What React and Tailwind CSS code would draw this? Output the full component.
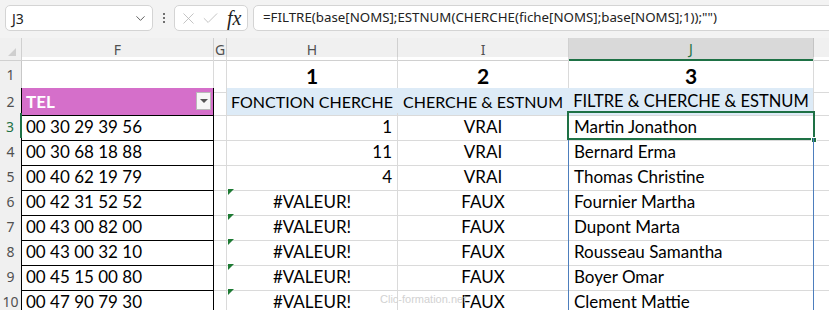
import { ChevronDown, X, Check } from 'lucide-react';

const grid = 'grid grid-cols-[22px_192px_13px_171px_171px_245px_1fr]';
const cellFont = { fontFamily: 'Lato, "Open Sans", sans-serif' };
const uiFont = { fontFamily: '"Noto Sans", "Open Sans", sans-serif' };

const phones = [
  '00 30 29 39 56',
  '00 30 68 18 88',
  '00 40 62 19 79',
  '00 42 31 52 52',
  '00 43 00 82 00',
  '00 43 00 32 10',
  '00 45 15 00 80',
  '00 47 90 79 30',
];
const positions = ['1', '11', '4', null, null, null, null, null];
const names = [
  'Martin Jonathon',
  'Bernard Erma',
  'Thomas Christine',
  'Fournier Martha',
  'Dupont Marta',
  'Rousseau Samantha',
  'Boyer Omar',
  'Clement Mattie',
];

const TopBar = () => (
  <div className="h-[38px] bg-[#f3f3f3] flex items-start pt-[5px] pl-[5px] overflow-hidden" style={uiFont}>
    <div className="w-[148px] h-[26px] bg-white border border-[#d4d4d4] rounded-[5px] flex items-center justify-between pl-[6px] pr-[4px] text-[14px] text-[#222]">
      <span>J3</span>
      <ChevronDown size={15} strokeWidth={1.5} className="text-[#555]" />
    </div>
    <div className="w-[21px] h-[26px] flex flex-col items-center justify-center gap-[2px]">
      <span className="w-[2px] h-[2px] bg-[#444] rounded-full" />
      <span className="w-[2px] h-[2px] bg-[#444] rounded-full" />
      <span className="w-[2px] h-[2px] bg-[#444] rounded-full" />
    </div>
    <div className="w-[74px] h-[26px] bg-white border border-[#d4d4d4] rounded-[5px] flex items-center pl-[4px]">
      <X size={19} strokeWidth={1} className="text-[#b4b4b4]" />
      <Check size={19} strokeWidth={1} className="text-[#b4b4b4] ml-[3px]" />
      <span className="ml-[7px] text-[20px] italic text-[#222] leading-none" style={{ fontFamily: '"Liberation Serif", serif' }}>fx</span>
    </div>
    <div className="flex-1 ml-[5px] -mr-[10px] h-[26px] bg-white border border-[#d4d4d4] rounded-l-[5px] flex items-center pl-[9px] text-[13.3px] text-[#222] whitespace-nowrap">
      =FILTRE(base[NOMS];ESTNUM(CHERCHE(fiche[NOMS];base[NOMS];1));"")
    </div>
  </div>
);

const ColHeader = () => (
  <div className={`${grid} h-[19px] bg-[#f0f0f0] text-[14px] text-[#505050]`} style={uiFont}>
    <div className="relative border-r border-b border-[#d0d0d0]">
      <div className="absolute right-[5px] bottom-[4px] w-0 h-0 border-l-[8px] border-l-transparent border-b-[8px] border-b-[#cfcfcf]" />
    </div>
    <div className="flex items-center justify-center border-r border-b border-[#d0d0d0]">F</div>
    <div className="flex items-center justify-center border-r border-b border-[#d0d0d0]">G</div>
    <div className="flex items-center justify-center border-r border-b border-[#d0d0d0]">H</div>
    <div className="flex items-center justify-center border-r border-b border-[#d0d0d0]">I</div>
    <div className="flex items-center justify-center bg-[#d9d9d9] text-[#1e7145] border-r border-[#c4c4c4] border-b-2 border-b-[#1e7145]">J</div>
    <div className="border-b border-[#d0d0d0]" />
  </div>
);

const RowNum = ({ n, active, edge }) => (
  <div
    className={`flex items-center justify-center bg-[#f0f0f0] border-b border-[#dadada] text-[14px] ${
      active ? 'text-[#1e7145] border-r-2 border-r-[#1e7145]' : edge ? 'text-[#505050] border-r border-r-black' : 'text-[#505050] border-r border-r-[#c8c8c8]'
    }`}
    style={uiFont}
  >
    {n}
  </div>
);

const Sheet = () => (
  <div className="relative">
    <ColHeader />

    <div className={`${grid} h-[31px]`} style={cellFont}>
      <RowNum n={1} />
      <div className="border-r border-[#dadada] border-b border-b-black" />
      <div className="border-r border-b border-[#dadada]" />
      <div className="flex items-center justify-center pt-[3px] text-[21px] font-bold text-black border-r border-b border-[#dadada]">1</div>
      <div className="flex items-center justify-center pt-[3px] text-[21px] font-bold text-black border-r border-b border-[#dadada]">2</div>
      <div className="flex items-center justify-center pt-[3px] text-[21px] font-bold text-black border-r border-b border-[#dadada]">3</div>
      <div className="border-b border-[#dadada]" />
    </div>

    <div className={`${grid} h-[25px]`} style={cellFont}>
      <RowNum n={2} edge />
      <div className="flex items-center justify-between bg-[#d56fca] border-r border-b border-black pl-[4px] pr-[2px]">
        <span className="text-white font-bold text-[17px] pt-[1px]">TEL</span>
        <span className="w-[15px] h-[18px] bg-[#f7f7f7] border border-[#b9b9b9] flex items-center justify-center">
          <span className="w-0 h-0 border-l-[4px] border-r-[4px] border-t-[4px] border-l-transparent border-r-transparent border-t-[#555]" />
        </span>
      </div>
      <div className="border-r border-b border-[#dadada]" />
      <div className="flex items-center justify-center pt-[1px] bg-[#ddebf7] text-[16px] text-black border-r border-r-[#ddebf7] border-b border-b-[#dadada] whitespace-nowrap">FONCTION CHERCHE</div>
      <div className="flex items-center justify-center pt-[1px] bg-[#ddebf7] text-[16px] text-black border-r border-r-[#ddebf7] border-b border-b-[#dadada] whitespace-nowrap">CHERCHE &amp; ESTNUM</div>
      <div className="flex items-center justify-center pt-[1px] bg-[#ddebf7] text-[16.5px] text-black border-r border-r-[#dadada] border-b border-b-[#dadada] whitespace-nowrap">FILTRE &amp; CHERCHE &amp; ESTNUM</div>
      <div className="border-b border-[#dadada]" />
    </div>

    {phones.map((phone, i) => (
      <div key={phone} className={`${grid} h-[25px] text-[17px] text-black`} style={cellFont}>
        <RowNum n={i + 3} active={i === 0} edge />
        <div className="flex items-center pl-[4px] pt-[1px] border-r border-b border-black">{phone}</div>
        <div className="border-r border-b border-[#dadada]" />
        {positions[i] ? (
          <div className="flex items-center justify-end pr-[5px] pt-[1px] border-r border-b border-[#dadada]">{positions[i]}</div>
        ) : (
          <div className="relative flex items-center justify-center pt-[1px] border-r border-b border-[#dadada]">
            <span className="absolute left-[1px] top-[1px] w-0 h-0 border-t-[6px] border-r-[6px] border-t-[#1e7b34] border-r-transparent" />
            #VALEUR!
          </div>
        )}
        <div className="flex items-center justify-center pt-[1px] border-r border-r-[#4d7ebd] border-b border-b-[#dadada]">
          {positions[i] ? 'VRAI' : 'FAUX'}
        </div>
        <div className="relative flex items-center pl-[5px] pt-[1px] border-r border-r-[#4d7ebd] border-b border-b-[#dadada]">
          {names[i]}
          {i === 0 && (
            <>
              <span className="absolute -left-[2px] -top-[2px] -right-[2px] bottom-0 border-2 border-[#1e7145] pointer-events-none" />
              <span className="absolute -right-[4px] -bottom-[3px] w-[6px] h-[6px] bg-[#1e7145] border border-white" />
            </>
          )}
        </div>
        <div className="border-b border-[#dadada]" />
      </div>
    ))}

    <span className="absolute left-[380px] top-[253px] text-[11px] text-[#d2d2d2]" style={{ fontFamily: '"Liberation Sans", sans-serif' }}>
      Clic-formation.net
    </span>
  </div>
);

export default function App() {
  return (
    <div className="w-[829px] h-[310px] overflow-hidden bg-white">
      <TopBar />
      <Sheet />
    </div>
  );
}
